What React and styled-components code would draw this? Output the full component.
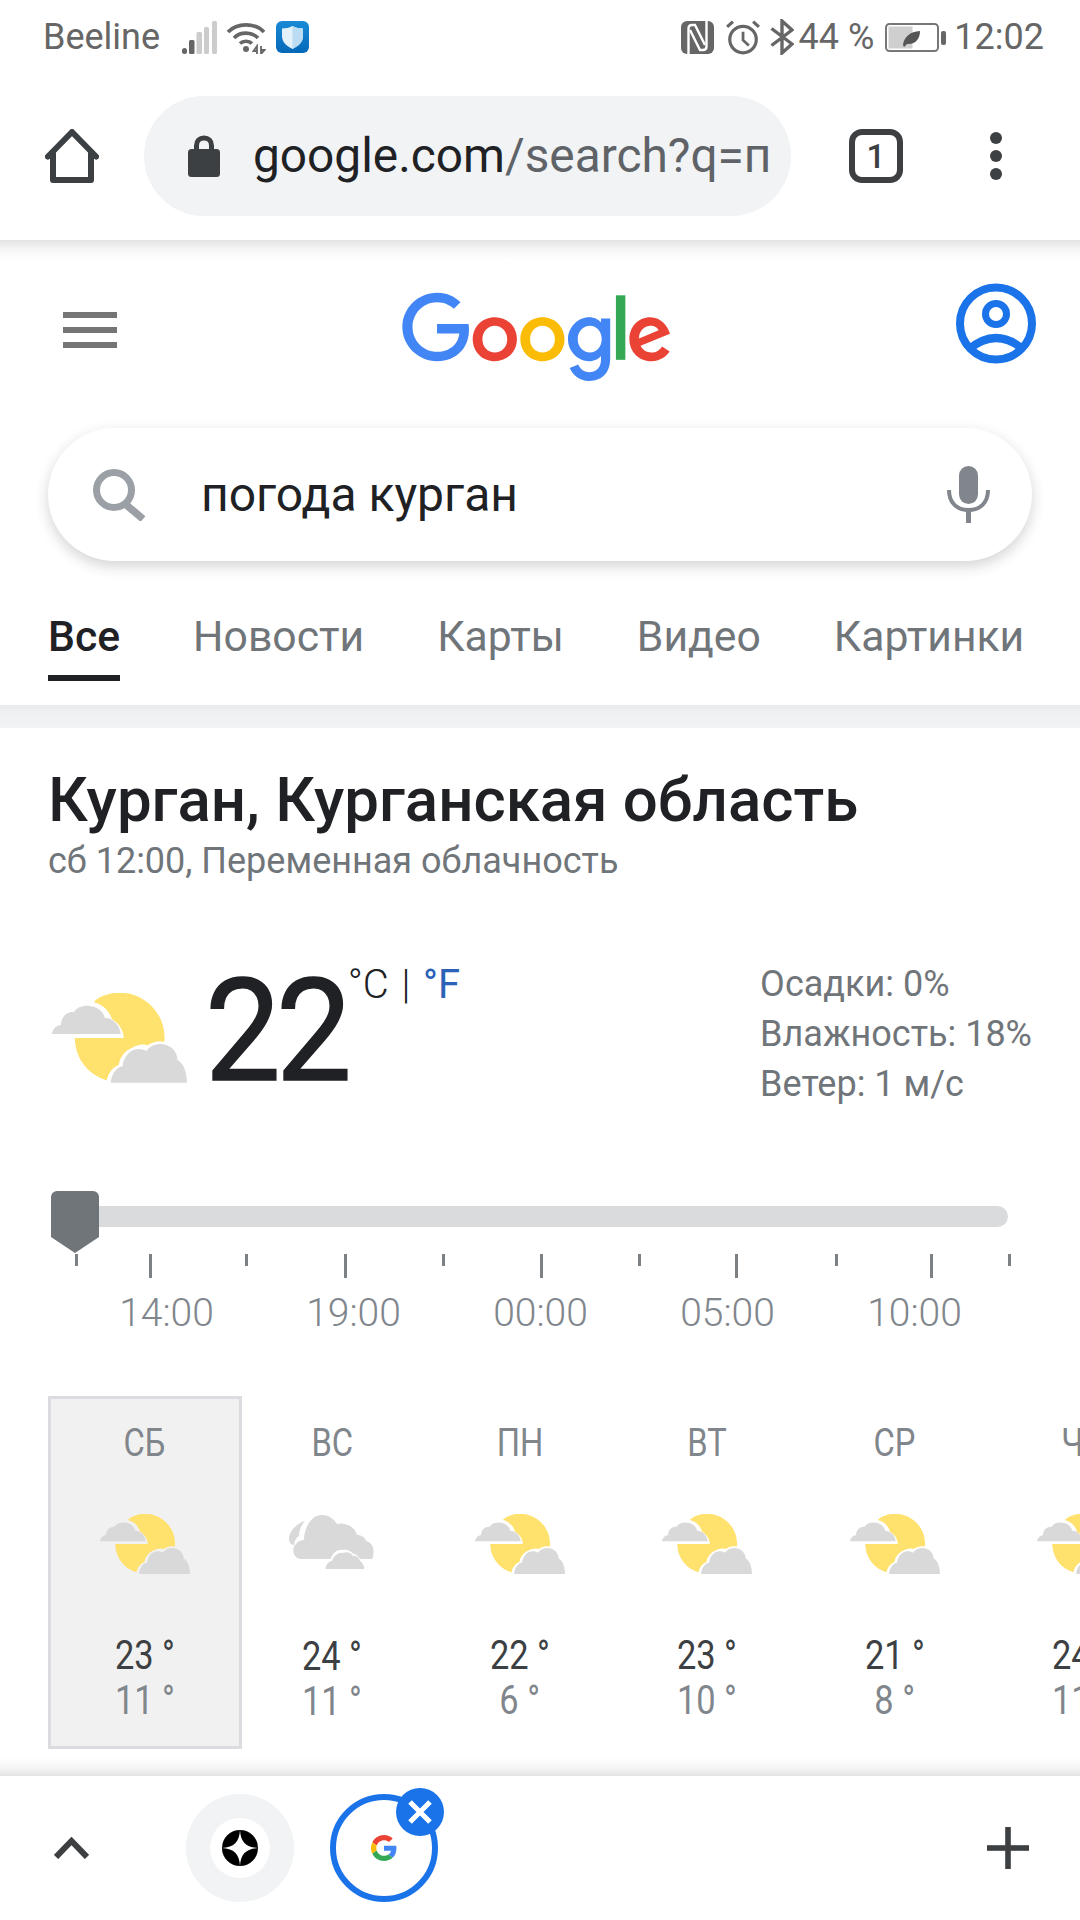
import React from "react";
import styled, { createGlobalStyle } from "styled-components";

const GlobalStyle = createGlobalStyle`
  html, body {
    margin: 0;
    padding: 0;
    background: #fff;
  }
  * {
    box-sizing: border-box;
  }
`;

const Page = styled.div`
  width: 1080px;
  height: 1920px;
  display: flex;
  flex-direction: column;
  overflow: hidden;
  background: #fff;
  font-family: Roboto, "Noto Sans", sans-serif;
`;

const StatusBar = styled.div`
  height: 74px;
  flex: none;
  display: flex;
  align-items: center;
  padding: 0 36px 0 43px;
  color: #666;
  font-size: 36px;
  svg {
    flex: none;
    display: block;
  }
`;

const StatusText = styled.span`
  margin: 0 ${(p) => p.$right || 0}px 0 ${(p) => p.$left || 0}px;
  line-height: 74px;
`;

const StatusGroup = styled.div`
  margin-left: auto;
  display: flex;
  align-items: center;
`;

const Toolbar = styled.div`
  height: 166px;
  flex: none;
  display: flex;
  align-items: center;
  padding: 22px 0 24px 45px;
`;

const UrlPill = styled.div`
  width: 647px;
  height: 120px;
  margin-left: 45px;
  border-radius: 60px;
  background: #f1f3f4;
  display: flex;
  align-items: center;
  padding-left: 44px;
  flex: none;
`;

const UrlText = styled.div`
  margin-left: 33px;
  font-size: 47.8px;
  color: #5f6368;
  white-space: nowrap;
  b {
    font-weight: 400;
    color: #202124;
  }
`;

const TabCount = styled.div`
  width: 54px;
  height: 54px;
  margin-left: 58px;
  border: 6px solid #3c4043;
  border-radius: 13px;
  display: flex;
  align-items: center;
  justify-content: center;
  font-size: 33px;
  font-weight: 500;
  color: #3c4043;
`;

const MoreDots = styled.div`
  margin-left: 87px;
  display: flex;
  flex-direction: column;
  gap: 6px;
  i {
    width: 12px;
    height: 12px;
    border-radius: 50%;
    background: #3c4043;
  }
`;

const ShadowStrip = styled.div`
  height: ${(p) => p.$h}px;
  flex: none;
  background: linear-gradient(${(p) => p.$dir}, #e3e3e3, #f6f6f6 45%, #fff);
`;

const Header = styled.div`
  height: 168px;
  flex: none;
  display: flex;
  justify-content: space-between;
  align-items: flex-start;
  padding: 0 44px 0 63px;
`;

const Burger = styled.div`
  width: 54px;
  margin-top: 52px;
  display: flex;
  flex-direction: column;
  gap: 9px;
  i {
    height: 6px;
    background: #757575;
  }
`;

const LogoWrap = styled.div`
  margin-top: 32px;
`;

const AvatarWrap = styled.div`
  margin-top: 23px;
`;

const SearchBox = styled.div`
  height: 133px;
  margin: 0 48px;
  flex: none;
  border-radius: 67px;
  background: #fff;
  box-shadow: 0 5px 14px rgba(32, 33, 36, 0.2);
  display: flex;
  align-items: center;
  padding: 0 42px 0 45px;
`;

const SearchText = styled.div`
  margin-left: 55px;
  flex: 1;
  font-size: 48px;
  color: #202124;
`;

const Tabs = styled.div`
  height: 144px;
  flex: none;
  display: flex;
  align-items: flex-start;
  gap: 73px;
  padding: 50px 0 0 48px;
`;

const Tab = styled.div`
  height: 70px;
  line-height: 50px;
  font-size: 42.7px;
  font-weight: ${(p) => (p.$active ? 500 : 400)};
  color: ${(p) => (p.$active ? "#202124" : "#70757a")};
  border-bottom: 6px solid ${(p) => (p.$active ? "#202124" : "transparent")};
`;

const Band = styled.div`
  height: 23px;
  margin-bottom: 1px;
  flex: none;
  background: linear-gradient(#e8eaeb, #eff0f1 7px, #f1f3f4 23px);
`;

const Card = styled.div`
  flex: 1;
  min-height: 0;
  overflow: hidden;
  padding-top: 41px;
`;

const Title = styled.div`
  margin: 0 0 0 48px;
  font-size: 61.8px;
  line-height: 60px;
  font-weight: 500;
  color: #202124;
  white-space: nowrap;
`;

const Subtitle = styled.div`
  margin: 9px 0 0 48px;
  font-size: 36px;
  line-height: 44px;
  color: #70757a;
`;

const WeatherRow = styled.div`
  height: 308px;
  display: flex;
  align-items: flex-start;
  padding-left: 52px;
`;

const BigIcon = styled.div`
  margin-top: 110px;
`;

const Temp = styled.div`
  margin: 78px 0 0 18px;
  font-size: 142px;
  line-height: 1;
  color: #202124;
  letter-spacing: -5px;
  -webkit-text-stroke: 1.5px #202124;
  transform: scaleX(0.95);
  transform-origin: left center;
`;

const Units = styled.div`
  margin: 78px 0 0 -7px;
  font-size: 40px;
  line-height: 48px;
  font-weight: 300;
  color: #202124;
  word-spacing: 3px;
  white-space: nowrap;
  a {
    color: #2a62b8;
    font-weight: 400;
  }
`;

const Details = styled.div`
  margin: 76px 0 0 auto;
  padding-right: 48px;
  font-size: 36px;
  line-height: 50px;
  color: #70757a;
  white-space: nowrap;
`;

const Slider = styled.div`
  position: relative;
  width: 957px;
  height: 63px;
  margin-left: 51px;
`;

const Track = styled.div`
  height: 21px;
  margin-top: 15px;
  border-radius: 0 11px 11px 0;
  background: #d9dbdd;
  position: absolute;
  left: 0;
  right: 0;
`;

const Handle = styled.div`
  position: absolute;
  left: 0;
  top: 0;
`;

const Ticks = styled.div`
  display: grid;
  grid-template-columns: 74px 96px 99px 98px 98px 98px 97px 100px 95px 78px 3px;
  height: 37px;
  margin-left: 75px;
`;

const Tick = styled.i`
  display: block;
  width: 3px;
  height: ${(p) => (p.$long ? 24 : 12)}px;
  background: #7d8184;
`;

const TimeRow = styled.div`
  display: grid;
  grid-template-columns: repeat(5, 187px);
  padding-left: 73px;
  font-size: 39px;
  line-height: 44px;
  font-weight: 300;
  color: #80868b;
  text-align: center;
`;

const Forecast = styled.div`
  display: flex;
  margin-top: 61px;
  padding-left: 51px;
`;

const DayCell = styled.div`
  flex: none;
  width: 193.5px;
  height: 352.5px;
  margin: 0 -3px;
  padding-top: 21.5px;
  border: 3px solid ${(p) => (p.$selected ? "#dadce0" : "transparent")};
  background: ${(p) => (p.$selected ? "#f1f1f1" : "transparent")};
  display: flex;
  flex-direction: column;
  align-items: center;
  svg {
    margin-top: 49px;
    display: block;
  }
`;

const Narrow = styled.div`
  font-size: ${(p) => p.$size}px;
  line-height: 44px;
  white-space: nowrap;
  transform: scaleX(0.86);
  color: ${(p) => p.$color};
  margin-top: ${(p) => p.$top || 0}px;
`;

const BottomBar = styled.div`
  height: 144px;
  flex: none;
  display: flex;
  align-items: center;
  padding: 0 51px 0 54px;
`;

const TabBubble = styled.div`
  position: relative;
  width: 108px;
  height: 108px;
  flex: none;
  margin-left: ${(p) => p.$left}px;
  border-radius: 50%;
  display: flex;
  align-items: center;
  justify-content: center;
  background: ${(p) => (p.$active ? "#fff" : "#f1f3f4")};
  border: ${(p) => (p.$active ? "6px solid #1a73e8" : "none")};
`;

const InnerWhite = styled.div`
  width: 60px;
  height: 60px;
  border-radius: 50%;
  background: #fff;
  display: flex;
  align-items: center;
  justify-content: center;
`;

const CloseBadge = styled.div`
  position: absolute;
  top: -12px;
  left: 60px;
  width: 48px;
  height: 48px;
  border-radius: 50%;
  background: #1a73e8;
  display: flex;
  align-items: center;
  justify-content: center;
`;

const PlusWrap = styled.div`
  margin-left: auto;
  line-height: 0;
`;

const SignalIcon = () => (
  <svg width="35" height="33" viewBox="0 0 35 33">
    <rect x="0" y="27" width="5" height="6" rx="2.5" fill="#666" />
    <rect x="7" y="19" width="5.5" height="14" rx="1.5" fill="#666" />
    <rect x="14.5" y="11" width="5.5" height="22" rx="1.5" fill="#ccc" />
    <rect x="22" y="6" width="5" height="27" rx="1.5" fill="#ccc" />
    <rect x="30" y="0" width="5" height="33" rx="1.5" fill="#ccc" />
  </svg>
);

const WifiIcon = () => (
  <svg width="40" height="33" viewBox="0 0 40 33" fill="none" stroke="#666" strokeWidth="3.6" style={{ marginLeft: 9 }}>
    <path d="M2 11C11 1.5 29 1.5 38 11" />
    <path d="M8 17C14 10.5 26 10.5 32 17" />
    <path d="M14 22.5C17 19.5 23 19.5 26 22.5" />
    <circle cx="20" cy="28" r="3" fill="#666" stroke="none" />
    <path d="M31 33V25l-3.5 5h3.5M35 25v8l3.5-4h-3.5" strokeWidth="1.8" />
  </svg>
);

const VpnIcon = () => (
  <svg width="33" height="32" viewBox="0 0 33 32" style={{ marginLeft: 10 }}>
    <defs>
      <linearGradient id="vpnBg" x1="0" y1="0" x2="0" y2="1">
        <stop offset="0" stopColor="#1a8bd6" />
        <stop offset="1" stopColor="#0468b8" />
      </linearGradient>
    </defs>
    <rect width="33" height="32" rx="6" fill="url(#vpnBg)" />
    <path d="M16.5 5C20 6.8 23.5 7.5 27 7.5V15C27 21 22.5 25 16.5 28C10.5 25 6 21 6 15V7.5C9.5 7.5 13 6.8 16.5 5Z" fill="#e3f1fb" />
    <path d="M16.5 5C20 6.8 23.5 7.5 27 7.5V15C27 21 22.5 25 16.5 28Z" fill="#bcdcf3" />
  </svg>
);

const NfcIcon = () => (
  <svg width="33" height="33" viewBox="0 0 33 33" fill="none" stroke="#fff" strokeWidth="2.4">
    <rect width="33" height="33" rx="6" fill="#666" stroke="none" />
    <path d="M7.500 33V7.500Q7.500 4 11 4H14L24 24" />
    <path d="M25.500 0V25.500Q25.500 29 22 29H19L9 9" />
  </svg>
);

const AlarmIcon = () => (
  <svg width="35" height="35" viewBox="0 0 33 33" fill="none" stroke="#666" strokeWidth="3" style={{ marginLeft: 11 }}>
    <circle cx="17" cy="18.5" r="12.5" />
    <path d="M17 11V19L22.500 24" strokeWidth="2.6" />
    <path d="M2 6.500L7.500 1.500M32 6.500L26.500 1.500" strokeWidth="3" />
  </svg>
);

const BluetoothIcon = () => (
  <svg width="24" height="36" viewBox="0 0 24 36" fill="none" stroke="#666" strokeWidth="3.400" style={{ marginLeft: 10 }}>
    <path d="M1.500 9.500L22 25L12 34V2L22 11L1.500 26.500" />
  </svg>
);

const BatteryIcon = () => (
  <svg width="61" height="29" viewBox="0 0 61 29">
    <rect x="1" y="1" width="52" height="27" rx="3.5" fill="#fff" stroke="#777" strokeWidth="2" />
    <rect x="3.5" y="3.5" width="24" height="22" fill="#cfcfcf" />
    <path d="M18 22C19 14 25 8.5 35 8C35 16 30 22 22 21L19 24Z" fill="#555" />
    <rect x="56" y="8" width="5" height="14" rx="2" fill="#666" />
  </svg>
);

const HomeIcon = () => (
  <svg width="54" height="54" viewBox="0 0 54 54" fill="none" stroke="#3c4043" strokeWidth="6" strokeLinejoin="round" strokeLinecap="round" style={{ flex: "none" }}>
    <path d="M3 27.5L27 3L51 27.5" />
    <path d="M8 24V51H46V24" />
  </svg>
);

const LockIcon = () => (
  <svg width="32" height="42" viewBox="0 0 32 42" style={{ flex: "none" }}>
    <path d="M8.5 16V10.5C8.5 6 11.5 3 16 3S23.5 6 23.5 10.5V16" fill="none" stroke="#3c4043" strokeWidth="5" />
    <rect y="14" width="32" height="28" rx="3.5" fill="#3c4043" />
  </svg>
);

const GoogleLogo = () => (
  <svg width="270" height="90" viewBox="0 0 272 90" style={{ display: "block" }}>
    <path fill="#EA4335" d="M115.75 47.18c0 12.77-9.99 22.18-22.25 22.18s-22.25-9.41-22.25-22.18C71.25 34.32 81.24 25 93.5 25s22.25 9.32 22.25 22.18zm-9.74 0c0-7.98-5.79-13.44-12.51-13.44S80.99 39.2 80.99 47.18c0 7.9 5.79 13.44 12.51 13.44s12.51-5.55 12.51-13.44z" />
    <path fill="#FBBC05" d="M163.75 47.18c0 12.77-9.99 22.18-22.25 22.18s-22.25-9.41-22.25-22.18c0-12.85 9.99-22.18 22.25-22.18s22.25 9.32 22.25 22.18zm-9.74 0c0-7.98-5.79-13.44-12.51-13.44s-12.51 5.46-12.51 13.44c0 7.9 5.79 13.44 12.51 13.44s12.51-5.55 12.51-13.44z" />
    <path fill="#4285F4" d="M209.75 26.34v39.82c0 16.38-9.66 23.07-21.08 23.07-10.75 0-17.22-7.19-19.66-13.07l8.48-3.53c1.51 3.61 5.21 7.87 11.17 7.87 7.31 0 11.84-4.51 11.84-13v-3.19h-.34c-2.18 2.69-6.38 5.04-11.68 5.04-11.09 0-21.25-9.66-21.25-22.09 0-12.52 10.16-22.26 21.25-22.26 5.29 0 9.49 2.35 11.68 4.96h.34v-3.61h9.25zm-8.56 20.92c0-7.81-5.21-13.52-11.84-13.52-6.72 0-12.35 5.71-12.35 13.52 0 7.73 5.63 13.36 12.35 13.36 6.63 0 11.84-5.63 11.84-13.36z" />
    <path fill="#34A853" d="M225 3v65h-9.5V3h9.5z" />
    <path fill="#EA4335" d="M262.02 54.48l7.56 5.04c-2.44 3.61-8.32 9.83-18.48 9.83-12.6 0-22.01-9.74-22.01-22.18 0-13.19 9.49-22.18 20.92-22.18 11.51 0 17.14 9.16 18.98 14.11l1.01 2.52-29.65 12.28c2.27 4.45 5.8 6.72 10.75 6.72 4.96 0 8.4-2.44 10.92-6.14zm-23.27-7.98l19.82-8.23c-1.09-2.77-4.37-4.7-8.23-4.7-4.95 0-11.84 4.37-11.59 12.93z" />
    <path fill="#4285F4" d="M35.29 41.41V32H67c.31 1.64.47 3.58.47 5.68 0 7.06-1.93 15.79-8.15 22.01-6.05 6.3-13.78 9.66-24.02 9.66C16.32 69.35.36 53.89.36 34.91.36 15.93 16.32.47 35.3.47c10.5 0 17.98 4.12 23.6 9.49l-6.64 6.64c-4.03-3.78-9.49-6.72-16.97-6.72-13.86 0-24.7 11.17-24.7 25.03 0 13.86 10.84 25.03 24.7 25.03 8.99 0 14.11-3.61 17.39-6.89 2.66-2.66 4.41-6.46 5.1-11.65l-22.49.01z" />
  </svg>
);

const AvatarIcon = () => (
  <svg width="80" height="81" viewBox="0 0 80 81" fill="none" stroke="#1a73e8" style={{ display: "block" }}>
    <circle cx="40" cy="40.5" r="36" strokeWidth="8" />
    <circle cx="40" cy="31" r="10.5" strokeWidth="7" />
    <path d="M12 67Q40 43 68 67" strokeWidth="8" />
  </svg>
);

const SearchIcon = () => (
  <svg width="53" height="52" viewBox="0 0 53 52" fill="none" stroke="#9aa0a6" style={{ flex: "none" }}>
    <circle cx="21" cy="21" r="17.5" strokeWidth="7" />
    <path d="M31 34L50 50" strokeWidth="7.5" />
  </svg>
);

const MicIcon = () => (
  <svg width="43" height="57" viewBox="0 0 43 57" fill="none" style={{ flex: "none" }}>
    <rect x="12" y="0" width="19" height="38" rx="9.5" fill="#80868b" />
    <path d="M2 24C2 37 10 44 21.5 44S41 37 41 24" stroke="#80868b" strokeWidth="4" />
    <rect x="19" y="43" width="5" height="14" fill="#80868b" />
  </svg>
);

const PartlyCloudy = ({ width = 135, height = 90 }) => (
  <svg width={width} height={height} viewBox="0 0 135.5 90">
    <path
      fill="#ffe16d"
      d="M42 9C46 3.5 58 -0.5 68 -0.5C93 -0.5 113 20 113 44.5C113 46 112.8 47.5 112.5 49C108 47 100 49.5 96 52.5C92 50.5 85 52 80 55C75 57 68 63 67 72C61 74 56 81 55 87.5C36 82 23 65 23 45H72C72 38 68 31 60 26C59 20 52 11 42 9Z"
    />
    <path fill="#d9d9d9" d="M0 41C0.5 36 5 32 9 32C9 24 15 18 22 19C25 14 32 12 38 13C46 13.5 52 19 53 25C62 25 68 33 69 41Z" />
    <path fill="#d9d9d9" d="M59 90C59.5 81 65 74 71 73C72 63 79 56 87 56C90 56 93 57 95 58C98 53 104 51 109 51C118 51 126 58 126 67C131 70 135 76 135.5 90Z" />
  </svg>
);

const Cloudy = () => (
  <svg width="90" height="61" viewBox="0 0 90 61">
    <path fill="#d9d9d9" d="M18 7C12 8 2 16 2 25C2 28 4 31 7 31C8 26 9 24 12 22C12 16 15 10 18 7Z" />
    <path
      fill="#d9d9d9"
      d="M13 45C6 44 4 34 9 30C11 27 14 26 17 26C17 14 24 1 35 1C42 1 47 5 50 10C57 8 68 12 70 21C74 21 78 23 79 27C84 28 87 33 86.5 38C86.5 41 86 44 85 45H73C71 42 69 40 66 39.5C63 36 59 35 56 36C50 35 46 39 43.5 45Z"
    />
    <path fill="#d9d9d9" d="M38.5 55C39 50 42 47 45 47C47 41 52 38 56 39C60 37 64 39 66 42C69 41 72 44 73 47C75 48 77 51 77.5 55Z" />
  </svg>
);

const YandexIcon = () => (
  <svg width="36" height="36" viewBox="0 0 36 36">
    <circle cx="18" cy="18" r="18" fill="#000" />
    <path d="M18 0C18.600 12 24 17.400 36 18C24 18.600 18.600 24 18 36C17.400 24 12 18.600 0 18C12 17.400 17.400 12 18 0Z" fill="#fff" />
  </svg>
);

const GoogleG = () => (
  <svg width="26" height="26" viewBox="0 0 48 48">
    <path fill="#EA4335" d="M24 9.5c3.54 0 6.71 1.22 9.21 3.6l6.85-6.85C35.9 2.38 30.47 0 24 0 14.62 0 6.51 5.38 2.56 13.22l7.98 6.19C12.43 13.72 17.74 9.5 24 9.5z" />
    <path fill="#4285F4" d="M46.98 24.55c0-1.57-.15-3.09-.38-4.55H24v9.02h12.94c-.58 2.96-2.26 5.48-4.78 7.18l7.73 6c4.51-4.18 7.09-10.36 7.09-17.65z" />
    <path fill="#FBBC05" d="M10.53 28.59c-.5-1.45-.78-2.99-.78-4.59s.27-3.14.78-4.59l-7.98-6.19C.92 16.46 0 20.12 0 24c0 3.88.92 7.54 2.56 10.78l7.97-6.19z" />
    <path fill="#34A853" d="M24 48c6.48 0 11.93-2.13 15.89-5.81l-7.73-6c-2.15 1.45-4.92 2.3-8.16 2.3-6.26 0-11.57-4.22-13.47-9.91l-7.98 6.19C6.51 42.62 14.62 48 24 48z" />
  </svg>
);

const tabs = ["Все", "Новости", "Карты", "Видео", "Картинки"];
const times = ["14:00", "19:00", "00:00", "05:00", "10:00"];
const tickLongs = [false, true, false, true, false, true, false, true, false, true, false];
const days = [
  { day: "СБ", hi: 23, lo: 11, selected: true },
  { day: "ВС", hi: 24, lo: 11, cloudy: true },
  { day: "ПН", hi: 22, lo: 6 },
  { day: "ВТ", hi: 23, lo: 10 },
  { day: "СР", hi: 21, lo: 8 },
  { day: "ЧТ", hi: 24, lo: 11 },
];

export default function App() {
  return (
    <Page>
      <GlobalStyle />
      <StatusBar>
        <StatusText $right={22}>Beeline</StatusText>
        <SignalIcon />
        <WifiIcon />
        <VpnIcon />
        <StatusGroup>
          <NfcIcon />
          <AlarmIcon />
          <BluetoothIcon />
          <StatusText $left={5} $right={11}>44 %</StatusText>
          <BatteryIcon />
          <StatusText $left={8}>12:02</StatusText>
        </StatusGroup>
      </StatusBar>

      <Toolbar>
        <HomeIcon />
        <UrlPill>
          <LockIcon />
          <UrlText><b>google.com</b>/search?q=п</UrlText>
        </UrlPill>
        <TabCount>1</TabCount>
        <MoreDots><i /><i /><i /></MoreDots>
      </Toolbar>
      <ShadowStrip $h={20} $dir="to bottom" />

      <Header>
        <Burger><i /><i /><i /></Burger>
        <LogoWrap><GoogleLogo /></LogoWrap>
        <AvatarWrap><AvatarIcon /></AvatarWrap>
      </Header>

      <SearchBox>
        <SearchIcon />
        <SearchText>погода курган</SearchText>
        <MicIcon />
      </SearchBox>

      <Tabs>
        {tabs.map((t, i) => (
          <Tab key={t} $active={i === 0}>{t}</Tab>
        ))}
      </Tabs>
      <Band />

      <Card>
        <Title>Курган, Курганская область</Title>
        <Subtitle>сб 12:00, Переменная облачность</Subtitle>

        <WeatherRow>
          <BigIcon><PartlyCloudy /></BigIcon>
          <Temp>22</Temp>
          <Units>°C | <a>°F</a></Units>
          <Details>
            <div>Осадки: 0%</div>
            <div>Влажность: 18%</div>
            <div>Ветер: 1 м/с</div>
          </Details>
        </WeatherRow>

        <Slider>
          <Track />
          <Handle>
            <svg width="48" height="62" viewBox="0 0 48 62" style={{ display: "block" }}>
              <path d="M6 0H42A6 6 0 0 1 48 6V46L24 62L0 46V6A6 6 0 0 1 6 0Z" fill="#70757a" />
            </svg>
          </Handle>
        </Slider>

        <Ticks>
          {tickLongs.map((long, i) => (
            <Tick key={i} $long={long} />
          ))}
        </Ticks>

        <TimeRow>
          {times.map((t) => (
            <div key={t}>{t}</div>
          ))}
        </TimeRow>

        <Forecast>
          {days.map((d) => (
            <DayCell key={d.day} $selected={d.selected}>
              <Narrow $size={38} $color="#80868b">{d.day}</Narrow>
              {d.cloudy ? <Cloudy /> : <PartlyCloudy width={90} height={60} />}
              <Narrow $size={40} $color="#3c4043" $top={60}>{d.hi} °</Narrow>
              <Narrow $size={40} $color="#80868b" $top={1}>{d.lo} °</Narrow>
            </DayCell>
          ))}
        </Forecast>
      </Card>

      <ShadowStrip $h={19} $dir="to top" />
      <BottomBar>
        <svg width="35" height="22" viewBox="0 0 35 22" fill="none" stroke="#3c4043" strokeWidth="6" style={{ flex: "none" }}>
          <path d="M2 20L17.500 4L33 20" />
        </svg>
        <TabBubble $left={97}>
          <InnerWhite><YandexIcon /></InnerWhite>
        </TabBubble>
        <TabBubble $left={36} $active>
          <GoogleG />
          <CloseBadge>
            <svg width="26" height="26" viewBox="0 0 26 26" stroke="#fff" strokeWidth="5">
              <path d="M3 3L23 23M23 3L3 23" />
            </svg>
          </CloseBadge>
        </TabBubble>
        <PlusWrap>
          <svg width="42" height="42" viewBox="0 0 42 42" fill="#3c4043">
            <rect x="18.200" width="5.600" height="42" />
            <rect y="18.200" width="42" height="5.600" />
          </svg>
        </PlusWrap>
      </BottomBar>
    </Page>
  );
}
